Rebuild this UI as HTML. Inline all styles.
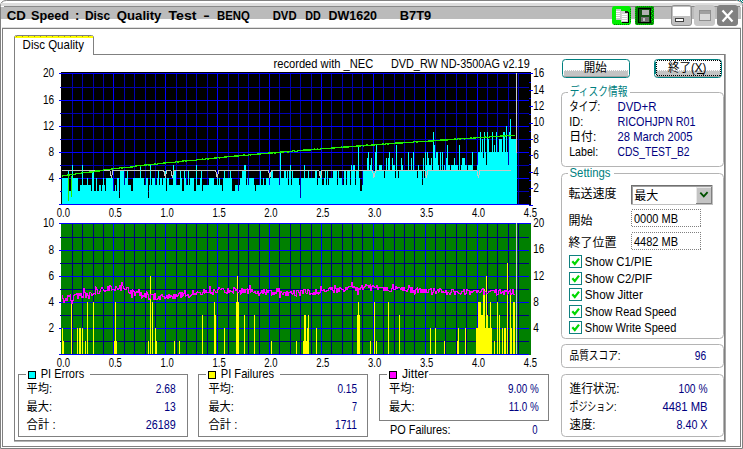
<!DOCTYPE html>
<html><head><meta charset="utf-8"><title>CD Speed : Disc Quality Test</title>
<style>html,body{margin:0;padding:0;background:#fff;overflow:hidden}svg text{white-space:pre}</style></head>
<body>
<svg width="743" height="449" viewBox="0 0 743 449" shape-rendering="crispEdges" font-family="'Liberation Sans','Noto Sans CJK JP',sans-serif" style="display:block">
<rect x="0" y="0" width="743" height="449" fill="#fff" />
<path d="M0.5 448.5V6.5Q0.5 0.5 6.5 0.5H736.5Q742.5 0.5 742.5 6.5V448.5Z" fill="#fff" stroke="#808080" stroke-width="1" shape-rendering="geometricPrecision"/>
<rect x="738" y="0" width="1" height="1" fill="#008080" />
<rect x="740" y="0" width="1" height="1" fill="#008080" />
<rect x="742" y="0" width="1" height="1" fill="#008080" />
<rect x="741" y="1" width="1" height="1" fill="#008080" />
<rect x="739" y="1" width="1" height="1" fill="#a08080" />
<rect x="742" y="2" width="1" height="1" fill="#008080" />
<rect x="1" y="3" width="740" height="3" fill="#dcdcdc" />
<rect x="1" y="7" width="740" height="12" fill="#bbbbbb" />
<rect x="4" y="6" width="736" height="1" fill="#888888" />
<rect x="2" y="27" width="739" height="1" fill="#dedede" />
<rect x="2" y="28" width="739" height="1" fill="#808080" />
<rect x="2" y="28" width="1" height="419" fill="#808080" />
<rect x="740" y="28" width="1" height="419" fill="#808080" />
<rect x="2" y="446" width="739" height="1" fill="#808080" />
<text y="20" fill="#000" font-size="13" font-weight="bold"><tspan x="6.8" textLength="19.1" lengthAdjust="spacingAndGlyphs">CD</tspan> <tspan x="31.1" textLength="38.0" lengthAdjust="spacingAndGlyphs">Speed</tspan> <tspan x="75.0">:</tspan> <tspan x="84.9" textLength="25.3" lengthAdjust="spacingAndGlyphs">Disc</tspan> <tspan x="116.8" textLength="44.6" lengthAdjust="spacingAndGlyphs">Quality</tspan> <tspan x="168.5" textLength="28.0" lengthAdjust="spacingAndGlyphs">Test</tspan> <tspan x="203.3" textLength="6.5" lengthAdjust="spacingAndGlyphs">-</tspan> <tspan x="217.0" textLength="32.8" lengthAdjust="spacingAndGlyphs">BENQ</tspan> <tspan x="272.7" textLength="23.9" lengthAdjust="spacingAndGlyphs">DVD</tspan> <tspan x="305.2" textLength="15.5" lengthAdjust="spacingAndGlyphs">DD</tspan> <tspan x="328.5" textLength="48.5" lengthAdjust="spacingAndGlyphs">DW1620</tspan> <tspan x="399.7" textLength="31.5" lengthAdjust="spacingAndGlyphs">B7T9</tspan></text>
<rect x="612" y="6" width="19" height="19" rx="3" fill="#00f000" shape-rendering="geometricPrecision"/>
<path d="M614 24.5H629" stroke="#008000" stroke-width="1" stroke-dasharray="1 1"/>
<path d="M630.5 9V22" stroke="#008000" stroke-width="1" stroke-dasharray="1 1"/>
<g><rect x="616" y="9" width="5" height="11" fill="#c8c8c8"/><rect x="616" y="11" width="4" height="1" fill="#fff"/><rect x="616" y="13" width="4" height="1" fill="#fff"/><rect x="616" y="15" width="4" height="1" fill="#fff"/><rect x="616" y="17" width="4" height="1" fill="#fff"/><rect x="621" y="11" width="7" height="11" fill="#d0d0d0"/><rect x="628" y="12" width="1" height="10" fill="#000"/><rect x="622" y="22" width="7" height="1" fill="#000"/><rect x="625" y="11" width="3" height="2" fill="#202020"/><rect x="622" y="14" width="5" height="1" fill="#fff"/><rect x="622" y="16" width="5" height="1" fill="#fff"/><rect x="622" y="18" width="5" height="1" fill="#fff"/><rect x="622" y="20" width="5" height="1" fill="#fff"/></g>
<rect x="635" y="6" width="19" height="19" rx="2" fill="#008000" shape-rendering="geometricPrecision"/>
<rect x="635.5" y="6.5" width="18" height="18" rx="2" fill="none" stroke="#00d000" stroke-dasharray="1 1" shape-rendering="crispEdges"/>
<g><rect x="638.5" y="8.5" width="12" height="14" fill="#105010" stroke="#000"/><rect x="642" y="10" width="7" height="5" fill="#b0b0b0"/><rect x="641" y="17" width="8" height="5" fill="#707070"/><rect x="643" y="18" width="2" height="3" fill="#c0c0c0"/><rect x="652" y="9" width="1" height="1" fill="#00ff00"/><rect x="651" y="11" width="1" height="1" fill="#00ff00"/><rect x="652" y="13" width="1" height="1" fill="#00ff00"/><rect x="651" y="15" width="1" height="1" fill="#00ff00"/><rect x="652" y="17" width="1" height="1" fill="#00ff00"/><rect x="651" y="19" width="1" height="1" fill="#00ff00"/><rect x="652" y="21" width="1" height="1" fill="#00ff00"/></g>
<rect x="671.5" y="5.5" width="20" height="20" rx="2.5" fill="#c0c0c0" stroke="#909090" shape-rendering="geometricPrecision"/>
<rect x="673" y="7" width="17" height="9" fill="#fff" />
<rect x="675" y="18" width="8" height="3" fill="#fff" stroke="#404040" stroke-width="1"/>
<rect x="694.5" y="5.5" width="20" height="20" rx="2.5" fill="#c8c8c8" stroke="#c8c8c8" shape-rendering="geometricPrecision"/>
<rect x="699.5" y="10.5" width="11" height="10" fill="#d8d8d8" stroke="#909090" stroke-width="1"/>
<rect x="700" y="11" width="10" height="3" fill="#a0a0a0" />
<rect x="717.5" y="5.5" width="20" height="20" rx="2.5" fill="#808080" stroke="#808080" shape-rendering="geometricPrecision"/>
<path d="M722.5 10.5L732.5 21.5M732.5 10.5L722.5 21.5" stroke="#fff" stroke-width="2.2" shape-rendering="geometricPrecision"/>
<rect x="93" y="54" width="633" height="1" fill="#808080" />
<rect x="14" y="37" width="1" height="404" fill="#808080" />
<rect x="725" y="54" width="1" height="388" fill="#a8a8a8" />
<rect x="14" y="441" width="712" height="1" fill="#b4b4b4" />
<rect x="724" y="54" width="1" height="387" fill="#808080" />
<rect x="14" y="440" width="711" height="1" fill="#808080" />
<rect x="93" y="37" width="1" height="18" fill="#808080" />
<path d="M14.5 38V37.5Q14.5 35.5 16.5 35.5H91.5Q93.5 35.5 93.5 37.5V38" fill="none" stroke="#808080" shape-rendering="geometricPrecision"/>
<rect x="15" y="36" width="78" height="2" fill="#ffff00" />
<path d="M16 36.5H92" stroke="#b0a000" stroke-width="1" stroke-dasharray="1 5" shape-rendering="crispEdges"/>
<text y="49.0" fill="#000" font-size="13" x="22.6" textLength="61.4" lengthAdjust="spacingAndGlyphs">Disc Quality</text>
<rect x="61" y="72" width="470" height="133" fill="#000" />
<rect x="72" y="73" width="1" height="132" fill="#0000b0" />
<rect x="82" y="73" width="1" height="132" fill="#0000b0" />
<rect x="93" y="73" width="1" height="132" fill="#0000b0" />
<rect x="103" y="73" width="1" height="132" fill="#0000b0" />
<rect x="113" y="73" width="1" height="132" fill="#0000ff" />
<rect x="124" y="73" width="1" height="132" fill="#0000b0" />
<rect x="134" y="73" width="1" height="132" fill="#0000b0" />
<rect x="145" y="73" width="1" height="132" fill="#0000b0" />
<rect x="155" y="73" width="1" height="132" fill="#0000b0" />
<rect x="165" y="73" width="1" height="132" fill="#0000ff" />
<rect x="176" y="73" width="1" height="132" fill="#0000b0" />
<rect x="186" y="73" width="1" height="132" fill="#0000b0" />
<rect x="196" y="73" width="1" height="132" fill="#0000b0" />
<rect x="207" y="73" width="1" height="132" fill="#0000b0" />
<rect x="217" y="73" width="1" height="132" fill="#0000ff" />
<rect x="228" y="73" width="1" height="132" fill="#0000b0" />
<rect x="238" y="73" width="1" height="132" fill="#0000b0" />
<rect x="248" y="73" width="1" height="132" fill="#0000b0" />
<rect x="259" y="73" width="1" height="132" fill="#0000b0" />
<rect x="269" y="73" width="1" height="132" fill="#0000ff" />
<rect x="279" y="73" width="1" height="132" fill="#0000b0" />
<rect x="290" y="73" width="1" height="132" fill="#0000b0" />
<rect x="300" y="73" width="1" height="132" fill="#0000b0" />
<rect x="311" y="73" width="1" height="132" fill="#0000b0" />
<rect x="321" y="73" width="1" height="132" fill="#0000ff" />
<rect x="331" y="73" width="1" height="132" fill="#0000b0" />
<rect x="342" y="73" width="1" height="132" fill="#0000b0" />
<rect x="352" y="73" width="1" height="132" fill="#0000b0" />
<rect x="362" y="73" width="1" height="132" fill="#0000b0" />
<rect x="373" y="73" width="1" height="132" fill="#0000ff" />
<rect x="383" y="73" width="1" height="132" fill="#0000b0" />
<rect x="394" y="73" width="1" height="132" fill="#0000b0" />
<rect x="404" y="73" width="1" height="132" fill="#0000b0" />
<rect x="414" y="73" width="1" height="132" fill="#0000b0" />
<rect x="425" y="73" width="1" height="132" fill="#0000ff" />
<rect x="435" y="73" width="1" height="132" fill="#0000b0" />
<rect x="445" y="73" width="1" height="132" fill="#0000b0" />
<rect x="456" y="73" width="1" height="132" fill="#0000b0" />
<rect x="466" y="73" width="1" height="132" fill="#0000b0" />
<rect x="477" y="73" width="1" height="132" fill="#0000ff" />
<rect x="487" y="73" width="1" height="132" fill="#0000b0" />
<rect x="497" y="73" width="1" height="132" fill="#0000b0" />
<rect x="508" y="73" width="1" height="132" fill="#0000b0" />
<rect x="518" y="73" width="1" height="132" fill="#0000b0" />
<rect x="59" y="73" width="474" height="1" fill="#0000ff" />
<rect x="60" y="87" width="469" height="1" fill="#0000b0" />
<rect x="59" y="100" width="470" height="1" fill="#0000ff" />
<rect x="60" y="113" width="469" height="1" fill="#0000b0" />
<rect x="59" y="126" width="470" height="1" fill="#0000ff" />
<rect x="60" y="139" width="469" height="1" fill="#0000b0" />
<rect x="59" y="152" width="470" height="1" fill="#0000ff" />
<rect x="60" y="165" width="469" height="1" fill="#0000b0" />
<rect x="59" y="178" width="470" height="1" fill="#0000ff" />
<rect x="60" y="191" width="469" height="1" fill="#0000b0" />
<rect x="59" y="204" width="470" height="1" fill="#0000ff" />
<rect x="529" y="73" width="4" height="1" fill="#0000ff" />
<rect x="529" y="82" width="2" height="1" fill="#0000ff" />
<rect x="529" y="90" width="4" height="1" fill="#0000ff" />
<rect x="529" y="98" width="2" height="1" fill="#0000ff" />
<rect x="529" y="106" width="4" height="1" fill="#0000ff" />
<rect x="529" y="114" width="2" height="1" fill="#0000ff" />
<rect x="529" y="123" width="4" height="1" fill="#0000ff" />
<rect x="529" y="131" width="2" height="1" fill="#0000ff" />
<rect x="529" y="139" width="4" height="1" fill="#0000ff" />
<rect x="529" y="147" width="2" height="1" fill="#0000ff" />
<rect x="529" y="155" width="4" height="1" fill="#0000ff" />
<rect x="529" y="164" width="2" height="1" fill="#0000ff" />
<rect x="529" y="172" width="4" height="1" fill="#0000ff" />
<rect x="529" y="180" width="2" height="1" fill="#0000ff" />
<rect x="529" y="188" width="4" height="1" fill="#0000ff" />
<rect x="529" y="196" width="2" height="1" fill="#0000ff" />
<rect x="529" y="205" width="4" height="1" fill="#0000ff" />
<text y="77.0" fill="#000" font-size="13" x="43.0" textLength="11.2" lengthAdjust="spacingAndGlyphs">20</text>
<text y="104.0" fill="#000" font-size="13" x="43.0" textLength="11.2" lengthAdjust="spacingAndGlyphs">16</text>
<text y="130.0" fill="#000" font-size="13" x="43.0" textLength="11.2" lengthAdjust="spacingAndGlyphs">12</text>
<text y="156.0" fill="#000" font-size="13" x="48.6" textLength="5.6" lengthAdjust="spacingAndGlyphs">8</text>
<text y="182.0" fill="#000" font-size="13" x="48.6" textLength="5.6" lengthAdjust="spacingAndGlyphs">4</text>
<text y="77.0" fill="#000" font-size="13" x="533.3" textLength="11.0" lengthAdjust="spacingAndGlyphs">16</text>
<text y="94.0" fill="#000" font-size="13" x="533.3" textLength="11.0" lengthAdjust="spacingAndGlyphs">14</text>
<text y="110.0" fill="#000" font-size="13" x="533.3" textLength="11.0" lengthAdjust="spacingAndGlyphs">12</text>
<text y="126.0" fill="#000" font-size="13" x="533.3" textLength="11.0" lengthAdjust="spacingAndGlyphs">10</text>
<text y="143.0" fill="#000" font-size="13" x="533.3" textLength="5.6" lengthAdjust="spacingAndGlyphs">8</text>
<text y="159.0" fill="#000" font-size="13" x="533.3" textLength="5.6" lengthAdjust="spacingAndGlyphs">6</text>
<text y="176.0" fill="#000" font-size="13" x="533.3" textLength="5.6" lengthAdjust="spacingAndGlyphs">4</text>
<text y="192.0" fill="#000" font-size="13" x="533.3" textLength="5.6" lengthAdjust="spacingAndGlyphs">2</text>
<text y="217.0" fill="#000" font-size="13" x="56.8" textLength="13.2" lengthAdjust="spacingAndGlyphs">0.0</text>
<text y="217.0" fill="#000" font-size="13" x="108.7" textLength="13.2" lengthAdjust="spacingAndGlyphs">0.5</text>
<text y="217.0" fill="#000" font-size="13" x="160.6" textLength="13.2" lengthAdjust="spacingAndGlyphs">1.0</text>
<text y="217.0" fill="#000" font-size="13" x="212.5" textLength="13.2" lengthAdjust="spacingAndGlyphs">1.5</text>
<text y="217.0" fill="#000" font-size="13" x="264.3" textLength="13.2" lengthAdjust="spacingAndGlyphs">2.0</text>
<text y="217.0" fill="#000" font-size="13" x="316.2" textLength="13.2" lengthAdjust="spacingAndGlyphs">2.5</text>
<text y="217.0" fill="#000" font-size="13" x="368.1" textLength="13.2" lengthAdjust="spacingAndGlyphs">3.0</text>
<text y="217.0" fill="#000" font-size="13" x="420.0" textLength="13.2" lengthAdjust="spacingAndGlyphs">3.5</text>
<text y="217.0" fill="#000" font-size="13" x="471.9" textLength="13.2" lengthAdjust="spacingAndGlyphs">4.0</text>
<text y="217.0" fill="#000" font-size="13" x="523.8" textLength="13.2" lengthAdjust="spacingAndGlyphs">4.5</text>
<path d="M62 205V178h1V178h1V178h1V178h1V178h1V178h1V171h1V191h1V191h1V191h1V165h1V178h1V178h1V178h1V178h1V178h1V191h1V191h1V185h1V185h1V165h1V185h1V185h1V185h1V185h1V178h1V185h1V185h1V185h1V191h1V171h1V171h1V191h1V191h1V178h1V191h1V191h1V185h1V185h1V191h1V185h1V178h1V185h1V191h1V178h1V178h1V178h1V178h1V178h1V178h1V178h1V191h1V191h1V185h1V191h1V178h1V178h1V198h1V171h1V171h1V171h1V171h1V185h1V178h1V178h1V171h1V185h1V185h1V185h1V191h1V191h1V178h1V178h1V178h1V178h1V178h1V178h1V178h1V165h1V178h1V178h1V178h1V185h1V185h1V178h1V178h1V198h1V185h1V165h1V185h1V178h1V178h1V178h1V185h1V185h1V178h1V171h1V185h1V178h1V178h1V185h1V178h1V178h1V171h1V191h1V178h1V178h1V185h1V185h1V185h1V185h1V165h1V171h1V171h1V185h1V185h1V185h1V185h1V171h1V178h1V191h1V191h1V171h1V178h1V185h1V185h1V171h1V185h1V178h1V178h1V178h1V178h1V191h1V191h1V165h1V185h1V185h1V185h1V178h1V171h1V191h1V185h1V185h1V185h1V185h1V185h1V185h1V178h1V178h1V178h1V178h1V178h1V185h1V185h1V185h1V178h1V185h1V178h1V185h1V185h1V191h1V178h1V171h1V178h1V178h1V178h1V178h1V178h1V171h1V178h1V191h1V191h1V191h1V185h1V185h1V185h1V191h1V185h1V178h1V178h1V171h1V171h1V165h1V165h1V185h1V178h1V185h1V178h1V178h1V178h1V178h1V178h1V185h1V191h1V185h1V185h1V185h1V185h1V171h1V185h1V185h1V178h1V185h1V185h1V178h1V178h1V178h1V185h1V178h1V171h1V171h1V178h1V178h1V178h1V178h1V178h1V178h1V185h1V152h1V178h1V178h1V178h1V171h1V171h1V178h1V171h1V185h1V171h1V165h1V185h1V171h1V178h1V178h1V178h1V178h1V178h1V178h1V185h1V198h1V178h1V178h1V178h1V165h1V178h1V178h1V178h1V171h1V178h1V178h1V178h1V178h1V178h1V178h1V171h1V171h1V185h1V178h1V178h1V171h1V171h1V185h1V185h1V178h1V171h1V185h1V171h1V185h1V178h1V178h1V178h1V178h1V171h1V171h1V171h1V171h1V185h1V171h1V178h1V178h1V178h1V185h1V185h1V171h1V171h1V185h1V171h1V171h1V171h1V185h1V165h1V171h1V165h1V165h1V185h1V171h1V171h1V145h1V178h1V191h1V191h1V185h1V171h1V171h1V171h1V171h1V158h1V152h1V171h1V165h1V158h1V171h1V171h1V171h1V152h1V145h1V171h1V171h1V165h1V165h1V165h1V171h1V171h1V178h1V171h1V158h1V171h1V158h1V152h1V171h1V171h1V158h1V165h1V165h1V178h1V145h1V171h1V178h1V171h1V171h1V158h1V165h1V171h1V171h1V171h1V171h1V171h1V152h1V171h1V171h1V158h1V171h1V152h1V171h1V171h1V171h1V178h1V165h1V171h1V171h1V171h1V185h1V158h1V178h1V152h1V165h1V152h1V158h1V165h1V165h1V158h1V171h1V132h1V145h1V158h1V152h1V152h1V165h1V171h1V152h1V171h1V152h1V171h1V165h1V171h1V158h1V145h1V165h1V165h1V171h1V165h1V165h1V165h1V158h1V165h1V165h1V165h1V171h1V145h1V171h1V165h1V158h1V158h1V158h1V165h1V165h1V171h1V165h1V165h1V165h1V165h1V152h1V171h1V171h1V171h1V171h1V165h1V152h1V152h1V132h1V152h1V139h1V158h1V132h1V152h1V165h1V132h1V139h1V152h1V152h1V152h1V132h1V152h1V145h1V152h1V132h1V152h1V152h1V139h1V139h1V139h1V152h1V132h1V132h1V152h1V126h1V152h1V165h1V132h1V119h1V139h1V139h1V139h1V139h1V139h1V139h1V205Z" fill="#00ffff"/>
<rect x="59" y="204" width="470" height="1" fill="#0000ff" />
<polyline points="62.0,170.5 109.9,170.5 111.4,177.5 112.9,170.5 163.8,170.5 165.3,177.5 166.8,170.5 170.9,170.5 172.4,177.5 173.9,170.5 215.7,170.5 217.2,177.5 218.7,170.5 268.4,170.5 269.9,177.5 271.4,170.5 318.9,170.5 320.4,177.5 321.9,170.5 372.5,170.5 374.0,177.5 375.5,170.5 424.9,170.5 426.4,177.5 427.9,170.5 476.9,170.5 478.4,177.5 479.9,170.5 511.0,170.5" fill="none" stroke="#c8c8c8" stroke-width="1" shape-rendering="crispEdges"/>
<polyline points="62,175.9 63,175.9 64,175.4 65,175.9 66,175.5 67,175.6 68,174.8 69,175.0 70,174.9 71,174.7 72,174.1 73,174.4 74,174.2 75,174.3 76,173.9 77,173.8 78,173.5 79,173.4 80,173.5 81,173.0 82,172.8 83,172.8 84,172.9 85,172.8 86,172.5 87,172.2 88,172.4 89,172.3 90,172.0 91,172.0 92,172.1 93,171.7 94,171.5 95,171.2 96,170.9 97,171.4 98,170.7 99,171.1 100,171.0 101,170.2 102,170.5 103,170.0 104,169.8 105,169.7 106,169.7 107,169.6 108,169.4 109,169.2 110,169.7 111,169.0 112,169.4 113,168.9 114,168.5 115,169.0 116,168.6 117,168.3 118,168.7 119,168.1 120,167.7 121,167.8 122,168.1 123,167.4 124,167.4 125,167.8 126,167.6 127,167.3 128,167.3 129,167.3 130,167.1 131,166.9 132,167.0 133,166.7 134,166.5 135,166.1 136,166.0 137,165.8 138,165.9 139,165.7 140,165.9 141,166.0 142,165.3 143,165.4 144,165.5 145,164.9 146,165.4 147,165.0 148,164.5 149,165.1 150,164.7 151,164.7 152,164.7 153,164.6 154,164.1 155,163.7 156,164.3 157,164.2 158,163.5 159,163.5 160,163.3 161,163.6 162,163.7 163,163.0 164,163.0 165,163.3 166,162.9 167,162.6 168,162.7 169,162.2 170,162.7 171,162.3 172,162.2 173,162.4 174,162.1 175,162.4 176,161.6 177,161.8 178,162.0 179,161.8 180,161.6 181,161.5 182,161.1 183,161.1 184,160.7 185,160.6 186,161.2 187,160.9 188,160.8 189,160.6 190,160.2 191,160.2 192,160.2 193,160.5 194,160.4 195,160.4 196,160.2 197,159.7 198,159.4 199,159.9 200,159.1 201,159.6 202,159.0 203,159.3 204,159.3 205,159.2 206,158.6 207,158.9 208,159.0 209,158.8 210,158.4 211,158.8 212,158.5 213,158.3 214,158.4 215,158.0 216,158.2 217,157.6 218,157.9 219,157.8 220,158.0 221,157.6 222,157.4 223,157.5 224,157.4 225,157.0 226,157.1 227,156.8 228,156.8 229,156.8 230,156.3 231,156.9 232,156.2 233,156.2 234,156.2 235,155.9 236,156.1 237,155.9 238,156.3 239,155.9 240,155.6 241,155.7 242,155.7 243,155.2 244,155.0 245,155.1 246,155.3 247,155.2 248,155.3 249,154.7 250,154.8 251,155.0 252,154.4 253,154.5 254,154.5 255,154.5 256,154.5 257,154.6 258,153.8 259,154.4 260,154.0 261,154.0 262,153.6 263,153.7 264,153.4 265,153.2 266,153.7 267,153.5 268,153.0 269,152.9 270,153.0 271,153.3 272,152.9 273,152.9 274,152.8 275,153.0 276,152.8 277,152.3 278,152.2 279,152.4 280,152.5 281,151.9 282,152.0 283,152.2 284,151.9 285,151.7 286,151.7 287,151.6 288,152.0 289,151.7 290,151.2 291,151.2 292,151.4 293,150.8 294,150.7 295,151.2 296,151.3 297,151.1 298,150.4 299,150.7 300,150.8 301,150.2 302,150.2 303,150.3 304,150.0 305,149.9 306,150.3 307,149.9 308,150.2 309,149.9 310,150.1 311,149.6 312,149.5 313,149.4 314,149.1 315,149.2 316,149.2 317,149.2 318,149.0 319,149.5 320,149.3 321,148.8 322,148.6 323,148.8 324,148.4 325,148.4 326,148.7 327,148.2 328,148.8 329,148.0 330,148.6 331,148.1 332,148.1 333,147.9 334,148.0 335,147.8 336,147.4 337,147.3 338,147.9 339,147.5 340,147.7 341,147.0 342,147.3 343,147.3 344,147.0 345,146.8 346,147.1 347,147.1 348,147.1 349,146.4 350,146.3 351,146.7 352,146.6 353,146.2 354,146.5 355,146.6 356,146.2 357,145.8 358,146.4 359,145.6 360,146.2 361,145.6 362,145.6 363,145.9 364,145.9 365,145.3 366,145.1 367,145.0 368,145.4 369,145.3 370,145.5 371,145.1 372,145.1 373,145.2 374,145.1 375,144.8 376,144.9 377,144.6 378,144.3 379,144.7 380,144.5 381,144.8 382,144.4 383,144.0 384,144.4 385,144.1 386,143.7 387,143.9 388,144.2 389,143.9 390,143.7 391,143.3 392,143.7 393,143.9 394,143.7 395,143.2 396,143.0 397,143.2 398,143.0 399,143.1 400,143.0 401,143.1 402,143.2 403,142.7 404,142.9 405,142.8 406,142.3 407,142.7 408,142.3 409,142.4 410,142.3 411,142.4 412,142.5 413,142.4 414,141.7 415,141.6 416,141.5 417,142.1 418,141.9 419,141.8 420,141.5 421,141.4 422,141.6 423,141.8 424,141.6 425,141.4 426,141.1 427,141.5 428,141.2 429,141.0 430,140.7 431,141.2 432,140.5 433,141.1 434,140.4 435,140.8 436,140.5 437,140.7 438,140.3 439,140.1 440,140.4 441,140.0 442,139.9 443,140.1 444,140.1 445,140.1 446,139.9 447,140.1 448,139.9 449,139.2 450,139.3 451,139.8 452,139.5 453,139.7 454,139.1 455,139.1 456,139.1 457,139.3 458,138.8 459,138.9 460,139.0 461,138.7 462,138.6 463,138.4 464,139.0 465,138.8 466,138.7 467,138.3 468,138.1 469,138.6 470,138.6 471,137.9 472,138.5 473,138.3 474,138.0 475,138.1 476,137.8 477,137.8 478,137.7 479,137.6 480,137.5 481,137.7 482,137.6 483,137.8 484,137.2 485,136.9 486,137.1 487,137.3 488,137.4 489,137.1 490,136.5 491,136.8 492,136.8 493,136.8 494,136.5 495,136.2 496,136.5 497,136.5 498,136.2 499,136.6 500,136.1 501,136.2 502,135.9 503,135.9 504,135.7 505,136.2 506,135.7 507,135.9 508,135.7 509,135.9 510,135.9 511,135.4 512,135.8 513,135.4 514,135.7 515,135.2" fill="none" stroke="#20f000" stroke-width="1.3" shape-rendering="crispEdges"/>
<rect x="68" y="176" width="1" height="25" fill="#20f000" />
<rect x="71" y="176" width="1" height="21" fill="#20f000" />
<rect x="516" y="73" width="1" height="80" fill="#c8c8c8" />
<rect x="61" y="223" width="470" height="132" fill="#008000" />
<rect x="72" y="223" width="1" height="132" fill="#000080" />
<rect x="82" y="223" width="1" height="132" fill="#000080" />
<rect x="93" y="223" width="1" height="132" fill="#000080" />
<rect x="103" y="223" width="1" height="132" fill="#000080" />
<rect x="113" y="223" width="1" height="132" fill="#0000ff" />
<rect x="124" y="223" width="1" height="132" fill="#000080" />
<rect x="134" y="223" width="1" height="132" fill="#000080" />
<rect x="145" y="223" width="1" height="132" fill="#000080" />
<rect x="155" y="223" width="1" height="132" fill="#000080" />
<rect x="165" y="223" width="1" height="132" fill="#0000ff" />
<rect x="176" y="223" width="1" height="132" fill="#000080" />
<rect x="186" y="223" width="1" height="132" fill="#000080" />
<rect x="196" y="223" width="1" height="132" fill="#000080" />
<rect x="207" y="223" width="1" height="132" fill="#000080" />
<rect x="217" y="223" width="1" height="132" fill="#0000ff" />
<rect x="228" y="223" width="1" height="132" fill="#000080" />
<rect x="238" y="223" width="1" height="132" fill="#000080" />
<rect x="248" y="223" width="1" height="132" fill="#000080" />
<rect x="259" y="223" width="1" height="132" fill="#000080" />
<rect x="269" y="223" width="1" height="132" fill="#0000ff" />
<rect x="279" y="223" width="1" height="132" fill="#000080" />
<rect x="290" y="223" width="1" height="132" fill="#000080" />
<rect x="300" y="223" width="1" height="132" fill="#000080" />
<rect x="311" y="223" width="1" height="132" fill="#000080" />
<rect x="321" y="223" width="1" height="132" fill="#0000ff" />
<rect x="331" y="223" width="1" height="132" fill="#000080" />
<rect x="342" y="223" width="1" height="132" fill="#000080" />
<rect x="352" y="223" width="1" height="132" fill="#000080" />
<rect x="362" y="223" width="1" height="132" fill="#000080" />
<rect x="373" y="223" width="1" height="132" fill="#0000ff" />
<rect x="383" y="223" width="1" height="132" fill="#000080" />
<rect x="394" y="223" width="1" height="132" fill="#000080" />
<rect x="404" y="223" width="1" height="132" fill="#000080" />
<rect x="414" y="223" width="1" height="132" fill="#000080" />
<rect x="425" y="223" width="1" height="132" fill="#0000ff" />
<rect x="435" y="223" width="1" height="132" fill="#000080" />
<rect x="445" y="223" width="1" height="132" fill="#000080" />
<rect x="456" y="223" width="1" height="132" fill="#000080" />
<rect x="466" y="223" width="1" height="132" fill="#000080" />
<rect x="477" y="223" width="1" height="132" fill="#0000ff" />
<rect x="487" y="223" width="1" height="132" fill="#000080" />
<rect x="497" y="223" width="1" height="132" fill="#000080" />
<rect x="508" y="223" width="1" height="132" fill="#000080" />
<rect x="518" y="223" width="1" height="132" fill="#000080" />
<rect x="59" y="223" width="472" height="1" fill="#0000ff" />
<rect x="60" y="237" width="469" height="1" fill="#000080" />
<rect x="59" y="250" width="470" height="1" fill="#0000ff" />
<rect x="60" y="263" width="469" height="1" fill="#000080" />
<rect x="59" y="276" width="470" height="1" fill="#0000ff" />
<rect x="60" y="289" width="469" height="1" fill="#000080" />
<rect x="59" y="302" width="470" height="1" fill="#0000ff" />
<rect x="60" y="315" width="469" height="1" fill="#000080" />
<rect x="59" y="328" width="470" height="1" fill="#0000ff" />
<rect x="60" y="341" width="469" height="1" fill="#000080" />
<rect x="59" y="354" width="470" height="1" fill="#0000ff" />
<text y="227.0" fill="#000" font-size="13" x="43.0" textLength="11.2" lengthAdjust="spacingAndGlyphs">10</text>
<text y="254.0" fill="#000" font-size="13" x="48.6" textLength="5.6" lengthAdjust="spacingAndGlyphs">8</text>
<text y="280.0" fill="#000" font-size="13" x="48.6" textLength="5.6" lengthAdjust="spacingAndGlyphs">6</text>
<text y="306.0" fill="#000" font-size="13" x="48.6" textLength="5.6" lengthAdjust="spacingAndGlyphs">4</text>
<text y="332.0" fill="#000" font-size="13" x="48.6" textLength="5.6" lengthAdjust="spacingAndGlyphs">2</text>
<text y="227.0" fill="#000" font-size="13" x="533.3" textLength="11.0" lengthAdjust="spacingAndGlyphs">20</text>
<text y="253.0" fill="#000" font-size="13" x="533.3" textLength="11.0" lengthAdjust="spacingAndGlyphs">16</text>
<text y="280.0" fill="#000" font-size="13" x="533.3" textLength="11.0" lengthAdjust="spacingAndGlyphs">12</text>
<text y="306.0" fill="#000" font-size="13" x="533.3" textLength="5.6" lengthAdjust="spacingAndGlyphs">8</text>
<text y="332.0" fill="#000" font-size="13" x="533.3" textLength="5.6" lengthAdjust="spacingAndGlyphs">4</text>
<text y="367.0" fill="#000" font-size="13" x="56.8" textLength="13.2" lengthAdjust="spacingAndGlyphs">0.0</text>
<text y="367.0" fill="#000" font-size="13" x="108.7" textLength="13.2" lengthAdjust="spacingAndGlyphs">0.5</text>
<text y="367.0" fill="#000" font-size="13" x="160.6" textLength="13.2" lengthAdjust="spacingAndGlyphs">1.0</text>
<text y="367.0" fill="#000" font-size="13" x="212.5" textLength="13.2" lengthAdjust="spacingAndGlyphs">1.5</text>
<text y="367.0" fill="#000" font-size="13" x="264.3" textLength="13.2" lengthAdjust="spacingAndGlyphs">2.0</text>
<text y="367.0" fill="#000" font-size="13" x="316.2" textLength="13.2" lengthAdjust="spacingAndGlyphs">2.5</text>
<text y="367.0" fill="#000" font-size="13" x="368.1" textLength="13.2" lengthAdjust="spacingAndGlyphs">3.0</text>
<text y="367.0" fill="#000" font-size="13" x="420.0" textLength="13.2" lengthAdjust="spacingAndGlyphs">3.5</text>
<text y="367.0" fill="#000" font-size="13" x="471.9" textLength="13.2" lengthAdjust="spacingAndGlyphs">4.0</text>
<text y="367.0" fill="#000" font-size="13" x="523.8" textLength="13.2" lengthAdjust="spacingAndGlyphs">4.5</text>
<rect x="62" y="328" width="1" height="26" fill="#ffff00" />
<rect x="63" y="341" width="1" height="13" fill="#ffff00" />
<rect x="71" y="302" width="1" height="52" fill="#ffff00" />
<rect x="77" y="328" width="1" height="26" fill="#ffff00" />
<rect x="79" y="328" width="1" height="26" fill="#ffff00" />
<rect x="80" y="328" width="1" height="26" fill="#ffff00" />
<rect x="82" y="328" width="1" height="26" fill="#ffff00" />
<rect x="85" y="341" width="1" height="13" fill="#ffff00" />
<rect x="87" y="302" width="1" height="52" fill="#ffff00" />
<rect x="93" y="302" width="1" height="52" fill="#ffff00" />
<rect x="114" y="341" width="1" height="13" fill="#ffff00" />
<rect x="115" y="302" width="1" height="52" fill="#ffff00" />
<rect x="116" y="341" width="1" height="13" fill="#ffff00" />
<rect x="148" y="341" width="1" height="13" fill="#ffff00" />
<rect x="150" y="276" width="1" height="78" fill="#ffff00" />
<rect x="152" y="302" width="1" height="52" fill="#ffff00" />
<rect x="155" y="328" width="1" height="26" fill="#ffff00" />
<rect x="156" y="341" width="1" height="13" fill="#ffff00" />
<rect x="174" y="341" width="1" height="13" fill="#ffff00" />
<rect x="179" y="341" width="1" height="13" fill="#ffff00" />
<rect x="202" y="315" width="1" height="39" fill="#ffff00" />
<rect x="214" y="302" width="1" height="52" fill="#ffff00" />
<rect x="215" y="315" width="1" height="39" fill="#ffff00" />
<rect x="224" y="328" width="1" height="26" fill="#ffff00" />
<rect x="236" y="302" width="1" height="52" fill="#ffff00" />
<rect x="237" y="276" width="1" height="78" fill="#ffff00" />
<rect x="238" y="302" width="1" height="52" fill="#ffff00" />
<rect x="244" y="315" width="1" height="39" fill="#ffff00" />
<rect x="254" y="315" width="1" height="39" fill="#ffff00" />
<rect x="271" y="341" width="1" height="13" fill="#ffff00" />
<rect x="296" y="341" width="1" height="13" fill="#ffff00" />
<rect x="303" y="341" width="1" height="13" fill="#ffff00" />
<rect x="304" y="315" width="1" height="39" fill="#ffff00" />
<rect x="305" y="315" width="1" height="39" fill="#ffff00" />
<rect x="306" y="341" width="1" height="13" fill="#ffff00" />
<rect x="307" y="328" width="1" height="26" fill="#ffff00" />
<rect x="308" y="315" width="1" height="39" fill="#ffff00" />
<rect x="316" y="328" width="1" height="26" fill="#ffff00" />
<rect x="357" y="315" width="1" height="39" fill="#ffff00" />
<rect x="358" y="302" width="1" height="52" fill="#ffff00" />
<rect x="359" y="315" width="1" height="39" fill="#ffff00" />
<rect x="370" y="341" width="1" height="13" fill="#ffff00" />
<rect x="374" y="302" width="1" height="52" fill="#ffff00" />
<rect x="376" y="341" width="1" height="13" fill="#ffff00" />
<rect x="388" y="302" width="1" height="52" fill="#ffff00" />
<rect x="399" y="315" width="1" height="39" fill="#ffff00" />
<rect x="430" y="328" width="1" height="26" fill="#ffff00" />
<rect x="435" y="328" width="1" height="26" fill="#ffff00" />
<rect x="444" y="341" width="1" height="13" fill="#ffff00" />
<rect x="457" y="341" width="1" height="13" fill="#ffff00" />
<rect x="458" y="328" width="1" height="26" fill="#ffff00" />
<rect x="465" y="328" width="1" height="26" fill="#ffff00" />
<rect x="476" y="328" width="1" height="26" fill="#ffff00" />
<rect x="477" y="328" width="1" height="26" fill="#ffff00" />
<rect x="478" y="302" width="1" height="52" fill="#ffff00" />
<rect x="479" y="302" width="1" height="52" fill="#ffff00" />
<rect x="480" y="302" width="1" height="52" fill="#ffff00" />
<rect x="481" y="315" width="1" height="39" fill="#ffff00" />
<rect x="482" y="315" width="1" height="39" fill="#ffff00" />
<rect x="483" y="289" width="1" height="65" fill="#ffff00" />
<rect x="484" y="289" width="1" height="65" fill="#ffff00" />
<rect x="485" y="328" width="1" height="26" fill="#ffff00" />
<rect x="486" y="276" width="1" height="78" fill="#ffff00" />
<rect x="487" y="315" width="1" height="39" fill="#ffff00" />
<rect x="488" y="328" width="1" height="26" fill="#ffff00" />
<rect x="489" y="328" width="1" height="26" fill="#ffff00" />
<rect x="490" y="302" width="1" height="52" fill="#ffff00" />
<rect x="491" y="328" width="1" height="26" fill="#ffff00" />
<rect x="494" y="341" width="1" height="13" fill="#ffff00" />
<rect x="497" y="302" width="1" height="52" fill="#ffff00" />
<rect x="499" y="315" width="1" height="39" fill="#ffff00" />
<rect x="502" y="328" width="1" height="26" fill="#ffff00" />
<rect x="504" y="328" width="1" height="26" fill="#ffff00" />
<rect x="505" y="328" width="1" height="26" fill="#ffff00" />
<rect x="507" y="263" width="1" height="91" fill="#ffff00" />
<rect x="510" y="289" width="1" height="65" fill="#ffff00" />
<rect x="511" y="328" width="1" height="26" fill="#ffff00" />
<rect x="513" y="302" width="1" height="52" fill="#ffff00" />
<rect x="514" y="302" width="1" height="52" fill="#ffff00" />
<polyline points="62,295.6 63,298.5 64,302.7 65,300.6 66,298.2 67,300.2 68,295.6 69,296.4 70,295.0 71,300.5 72,303.4 73,300.2 74,295.8 75,294.7 76,294.4 77,293.9 78,298.8 79,293.8 80,295.8 81,293.5 82,297.1 83,297.3 84,288.3 85,292.3 86,297.4 87,293.1 88,295.1 89,299.0 90,292.6 91,293.0 92,295.8 93,294.6 94,292.9 95,294.1 96,287.1 97,289.3 98,293.7 99,293.9 100,291.7 101,288.9 102,287.6 103,289.0 104,290.8 105,291.7 106,290.1 107,290.9 108,286.3 109,290.7 110,286.0 111,286.1 112,290.1 113,288.9 114,290.0 115,290.2 116,286.6 117,288.0 118,289.5 119,289.0 120,285.3 121,291.1 122,282.3 123,285.9 124,288.2 125,289.4 126,290.1 127,287.4 128,287.5 129,292.7 130,293.5 131,290.0 132,297.8 133,289.9 134,291.1 135,295.4 136,292.7 137,291.1 138,292.6 139,289.0 140,295.6 141,292.6 142,298.1 143,295.5 144,297.1 145,293.8 146,298.2 147,291.9 148,294.0 149,299.6 150,298.7 151,294.6 152,294.8 153,294.6 154,299.5 155,293.4 156,299.2 157,299.4 158,298.9 159,296.4 160,299.7 161,295.2 162,294.5 163,296.8 164,296.8 165,299.0 166,297.8 167,295.8 168,298.7 169,293.8 170,297.8 171,295.0 172,296.5 173,298.8 174,294.4 175,298.8 176,293.7 177,296.9 178,295.5 179,293.1 180,292.9 181,297.5 182,291.8 183,296.1 184,293.6 185,290.1 186,296.0 187,295.7 188,294.5 189,298.0 190,296.5 191,295.0 192,294.8 193,290.6 194,294.7 195,293.4 196,294.2 197,291.9 198,292.1 199,292.5 200,292.6 201,294.5 202,294.5 203,292.6 204,289.6 205,293.1 206,290.5 207,292.4 208,292.5 209,292.8 210,285.7 211,293.3 212,292.2 213,294.5 214,289.2 215,291.0 216,292.7 217,292.6 218,289.4 219,287.6 220,289.1 221,289.5 222,288.0 223,288.3 224,290.0 225,292.8 226,292.3 227,293.4 228,288.2 229,292.2 230,289.9 231,291.3 232,291.2 233,293.1 234,287.7 235,288.7 236,290.2 237,288.9 238,292.4 239,292.1 240,290.7 241,294.4 242,288.4 243,292.8 244,289.7 245,292.4 246,289.8 247,288.9 248,293.5 249,289.1 250,285.3 251,291.8 252,289.6 253,292.1 254,292.3 255,291.3 256,293.4 257,293.6 258,291.6 259,295.3 260,293.5 261,292.4 262,290.0 263,293.3 264,289.8 265,292.7 266,294.9 267,289.9 268,292.8 269,290.4 270,290.9 271,290.5 272,295.0 273,292.8 274,294.8 275,292.1 276,293.8 277,288.1 278,292.0 279,287.8 280,297.5 281,291.8 282,292.9 283,294.3 284,292.7 285,292.4 286,295.2 287,291.3 288,295.4 289,292.7 290,292.2 291,291.7 292,294.0 293,293.8 294,290.4 295,295.6 296,296.0 297,290.5 298,290.0 299,292.1 300,295.7 301,290.6 302,290.2 303,293.8 304,289.7 305,289.7 306,293.1 307,294.0 308,289.9 309,290.3 310,294.1 311,293.9 312,293.2 313,294.2 314,292.5 315,294.4 316,289.6 317,293.1 318,292.8 319,294.2 320,292.3 321,286.0 322,290.8 323,290.7 324,289.1 325,291.7 326,291.4 327,290.2 328,290.8 329,288.3 330,287.7 331,289.8 332,287.3 333,290.8 334,292.5 335,285.0 336,288.5 337,292.9 338,288.1 339,292.3 340,287.5 341,288.6 342,289.1 343,289.4 344,292.0 345,290.9 346,287.8 347,289.7 348,287.3 349,286.6 350,286.3 351,286.8 352,282.2 353,287.3 354,286.3 355,287.5 356,290.7 357,286.7 358,294.9 359,288.4 360,290.0 361,287.5 362,285.0 363,289.3 364,287.4 365,286.4 366,284.8 367,286.0 368,285.2 369,287.2 370,284.9 371,290.8 372,286.2 373,285.5 374,286.6 375,287.5 376,288.1 377,285.5 378,289.4 379,287.3 380,287.8 381,287.5 382,287.6 383,287.0 384,290.8 385,286.8 386,290.9 387,287.1 388,290.4 389,291.0 390,291.5 391,291.2 392,289.1 393,283.8 394,289.4 395,290.0 396,286.7 397,288.7 398,287.1 399,287.5 400,288.1 401,289.5 402,287.2 403,290.7 404,287.4 405,290.8 406,290.8 407,291.8 408,289.4 409,285.6 410,286.9 411,292.7 412,287.2 413,292.7 414,290.8 415,294.1 416,289.6 417,287.9 418,292.2 419,289.1 420,288.8 421,292.9 422,288.9 423,293.2 424,289.2 425,292.4 426,289.4 427,292.3 428,292.4 429,289.3 430,289.9 431,288.7 432,294.6 433,292.3 434,288.8 435,291.1 436,293.6 437,291.0 438,288.9 439,292.1 440,288.8 441,289.8 442,292.5 443,291.0 444,292.5 445,292.4 446,290.0 447,294.2 448,292.5 449,293.1 450,294.7 451,292.4 452,289.6 453,289.2 454,291.5 455,295.0 456,291.6 457,291.8 458,292.4 459,293.6 460,293.9 461,294.1 462,291.2 463,291.9 464,289.6 465,294.0 466,293.9 467,289.5 468,290.9 469,290.4 470,294.4 471,291.2 472,292.8 473,291.3 474,290.0 475,290.4 476,290.7 477,292.6 478,290.5 479,291.9 480,292.6 481,291.5 482,289.7 483,288.8 484,294.8 485,291.4 486,291.9 487,293.7 488,292.9 489,291.7 490,292.0 491,290.1 492,290.8 493,290.7 494,290.2 495,293.0 496,289.4 497,295.0 498,294.6 499,290.2 500,289.4 501,293.6 502,292.4 503,291.5 504,294.9 505,290.1 506,291.6 507,290.7 508,294.1 509,291.6 510,289.9 511,294.8 512,293.9 513,289.5 514,294.7" fill="none" stroke="#ff00ff" stroke-width="1.2" shape-rendering="crispEdges"/>
<rect x="516" y="223" width="1" height="132" fill="#c8c8c8" />
<rect x="59" y="354" width="470" height="1" fill="#0000ff" />
<text y="68" fill="#000" font-size="13"><tspan x="273.5" textLength="99.8" lengthAdjust="spacingAndGlyphs">recorded with _NEC</tspan> <tspan x="390.9" textLength="138.8" lengthAdjust="spacingAndGlyphs">DVD_RW ND-3500AG v2.19</tspan></text>
<rect x="562.5" y="59.5" width="67" height="18" rx="3" fill="#fff" stroke="#008080" stroke-width="1" shape-rendering="geometricPrecision"/>
<rect x="564" y="70" width="64" height="7" fill="#c4c4c4" />
<path d="M564 70.5H628" stroke="#fff" stroke-width="1" stroke-dasharray="1 1"/>
<rect x="564" y="76" width="64" height="1" fill="#a0a0a0" />
<text y="72.0" fill="#000" font-size="12" x="583.8" textLength="23.0" lengthAdjust="spacingAndGlyphs">開始</text>
<rect x="654.5" y="59.5" width="67" height="18" rx="3" fill="#fff" stroke="#008080" stroke-width="1" shape-rendering="geometricPrecision"/>
<path d="M655.5 74V62" fill="none" stroke="#008080" stroke-width="1"/>
<rect x="656" y="70" width="64" height="7" fill="#c4c4c4" />
<path d="M656 70.5H720" stroke="#fff" stroke-width="1" stroke-dasharray="1 1"/>
<rect x="656" y="76" width="64" height="1" fill="#a0a0a0" />
<rect x="656.5" y="60.5" width="64" height="15" fill="none" stroke="#000" stroke-dasharray="1 1"/>
<text y="72.0" fill="#000" font-size="12" x="668.0" textLength="38.3" lengthAdjust="spacingAndGlyphs">終了(X)</text>
<rect x="697" y="73" width="7" height="1" fill="#000" />
<path d="M568 92.5H565.5Q561.5 92.5 561.5 96.5V162.5Q561.5 166.5 565.5 166.5H719.5Q723.5 166.5 723.5 162.5V96.5Q723.5 92.5 719.5 92.5H630" fill="none" stroke="#b4b4b4" stroke-width="1" shape-rendering="geometricPrecision"/>
<text y="96.0" fill="#008080" font-size="12" x="569.8" textLength="57.7" lengthAdjust="spacingAndGlyphs">ディスク情報</text>
<text y="111.0" fill="#000" font-size="12.5" x="569.2" textLength="31.0" lengthAdjust="spacingAndGlyphs">タイプ:</text>
<text y="111.0" fill="#000080" font-size="13" x="617.5" textLength="39.0" lengthAdjust="spacingAndGlyphs">DVD+R</text>
<text y="126.0" fill="#000" font-size="12.5" x="569.2" textLength="14.0" lengthAdjust="spacingAndGlyphs">ID:</text>
<text y="126.0" fill="#000080" font-size="13" x="617.5" textLength="78.0" lengthAdjust="spacingAndGlyphs">RICOHJPN R01</text>
<text y="141.0" fill="#000" font-size="12.5" x="569.2" textLength="27.0" lengthAdjust="spacingAndGlyphs">日付:</text>
<text y="141.0" fill="#000080" font-size="13" x="617.5" textLength="75.0" lengthAdjust="spacingAndGlyphs">28 March 2005</text>
<text y="156.0" fill="#000" font-size="12.5" x="569.2" textLength="29.0" lengthAdjust="spacingAndGlyphs">Label:</text>
<text y="156.0" fill="#000080" font-size="13" x="617.5" textLength="72.0" lengthAdjust="spacingAndGlyphs">CDS_TEST_B2</text>
<path d="M568 173.5H565.5Q561.5 173.5 561.5 177.5V334.5Q561.5 338.5 565.5 338.5H719.5Q723.5 338.5 723.5 334.5V177.5Q723.5 173.5 719.5 173.5H614" fill="none" stroke="#b4b4b4" stroke-width="1" shape-rendering="geometricPrecision"/>
<text y="177.0" fill="#008080" font-size="13" x="569.5" textLength="41.0" lengthAdjust="spacingAndGlyphs">Settings</text>
<text y="198.0" fill="#000" font-size="12" x="568.5" textLength="48.0" lengthAdjust="spacingAndGlyphs">転送速度</text>
<rect x="631" y="185" width="82" height="20" fill="#fff" />
<rect x="631" y="185" width="82" height="1" fill="#707070" />
<rect x="631" y="185" width="1" height="20" fill="#707070" />
<rect x="632" y="186" width="80" height="1" fill="#a0a0a0" />
<rect x="632" y="186" width="1" height="18" fill="#a0a0a0" />
<rect x="631" y="204" width="82" height="1" fill="#c0c0c0" />
<rect x="712" y="185" width="1" height="20" fill="#c0c0c0" />
<rect x="696" y="187" width="16" height="17" fill="#c4c4c4" />
<rect x="696" y="187" width="16" height="1" fill="#e8e8e8" />
<rect x="696" y="187" width="1" height="17" fill="#e8e8e8" />
<rect x="696" y="203" width="16" height="1" fill="#808080" />
<rect x="711" y="187" width="1" height="17" fill="#808080" />
<path d="M700.3 192.6L703.8 196.4L707.6 192.2" fill="none" stroke="#005000" stroke-width="1.8" shape-rendering="geometricPrecision"/>
<text y="200.0" fill="#000" font-size="12" x="634.3" textLength="24.0" lengthAdjust="spacingAndGlyphs">最大</text>
<text y="225.0" fill="#000" font-size="12" x="568.5" textLength="24.0" lengthAdjust="spacingAndGlyphs">開始</text>
<rect x="631.5" y="209.5" width="69" height="17" fill="#fff" stroke="#808080" stroke-width="1" stroke-dasharray="1 1"/>
<text y="223.0" fill="#000" font-size="13" x="633.9" textLength="44.1" lengthAdjust="spacingAndGlyphs">0000 MB</text>
<text y="247.0" fill="#000" font-size="12" x="568.5" textLength="48.0" lengthAdjust="spacingAndGlyphs">終了位置</text>
<rect x="631.5" y="232.5" width="69" height="17" fill="#fff" stroke="#808080" stroke-width="1" stroke-dasharray="1 1"/>
<text y="246.0" fill="#000" font-size="13" x="633.9" textLength="44.1" lengthAdjust="spacingAndGlyphs">4482 MB</text>
<rect x="569.5" y="255.5" width="12" height="12" fill="#fff" stroke="#108080" stroke-width="1"/>
<path d="M572.3 261.2L574.8 264L579 258.6" fill="none" stroke="#00d800" stroke-width="2.2" shape-rendering="geometricPrecision"/>
<text y="266.0" fill="#000" font-size="13" x="584.8" textLength="67.5" lengthAdjust="spacingAndGlyphs">Show C1/PIE</text>
<rect x="569.5" y="272.5" width="12" height="12" fill="#fff" stroke="#108080" stroke-width="1"/>
<path d="M572.3 278.2L574.8 281L579 275.6" fill="none" stroke="#00d800" stroke-width="2.2" shape-rendering="geometricPrecision"/>
<text y="283.0" fill="#000" font-size="13" x="584.8" textLength="67.5" lengthAdjust="spacingAndGlyphs">Show C2/PIF</text>
<rect x="569.5" y="288.5" width="12" height="12" fill="#fff" stroke="#108080" stroke-width="1"/>
<path d="M572.3 294.2L574.8 297L579 291.6" fill="none" stroke="#00d800" stroke-width="2.2" shape-rendering="geometricPrecision"/>
<text y="299.0" fill="#000" font-size="13" x="584.8" textLength="58.0" lengthAdjust="spacingAndGlyphs">Show Jitter</text>
<rect x="569.5" y="305.5" width="12" height="12" fill="#fff" stroke="#108080" stroke-width="1"/>
<path d="M572.3 311.2L574.8 314L579 308.6" fill="none" stroke="#00d800" stroke-width="2.2" shape-rendering="geometricPrecision"/>
<text y="316.0" fill="#000" font-size="13" x="584.8" textLength="91.5" lengthAdjust="spacingAndGlyphs">Show Read Speed</text>
<rect x="569.5" y="321.5" width="12" height="12" fill="#fff" stroke="#108080" stroke-width="1"/>
<path d="M572.3 327.2L574.8 330L579 324.6" fill="none" stroke="#00d800" stroke-width="2.2" shape-rendering="geometricPrecision"/>
<text y="332.0" fill="#000" font-size="13" x="584.8" textLength="91.5" lengthAdjust="spacingAndGlyphs">Show Write Speed</text>
<path d="M565.5 344.5Q561.5 344.5 561.5 348.5V363.5Q561.5 367.5 565.5 367.5H719.5Q723.5 367.5 723.5 363.5V348.5Q723.5 344.5 719.5 344.5Z" fill="none" stroke="#b4b4b4" stroke-width="1" shape-rendering="geometricPrecision"/>
<text y="360.0" fill="#000" font-size="12" x="569.5" textLength="51.0" lengthAdjust="spacingAndGlyphs">品質スコア:</text>
<text y="360.0" fill="#000080" font-size="13" x="694.8" textLength="11.4" lengthAdjust="spacingAndGlyphs">96</text>
<path d="M565.5 374.5Q561.5 374.5 561.5 378.5V432.5Q561.5 436.5 565.5 436.5H719.5Q723.5 436.5 723.5 432.5V378.5Q723.5 374.5 719.5 374.5Z" fill="none" stroke="#b4b4b4" stroke-width="1" shape-rendering="geometricPrecision"/>
<text y="393.0" fill="#000" font-size="12" x="569.5" textLength="50.0" lengthAdjust="spacingAndGlyphs">進行状況:</text>
<text y="393.0" fill="#000080" font-size="13" x="678.5" textLength="29.0" lengthAdjust="spacingAndGlyphs">100 %</text>
<text y="411.0" fill="#000" font-size="12" x="569.5" textLength="47.0" lengthAdjust="spacingAndGlyphs">ポジション:</text>
<text y="411.0" fill="#000080" font-size="13" x="662.5" textLength="45.0" lengthAdjust="spacingAndGlyphs">4481 MB</text>
<text y="429.0" fill="#000" font-size="12" x="569.5" textLength="26.0" lengthAdjust="spacingAndGlyphs">速度:</text>
<text y="429.0" fill="#000080" font-size="13" x="676.5" textLength="31.0" lengthAdjust="spacingAndGlyphs">8.40 X</text>
<rect x="18" y="374" width="8" height="1" fill="#808080" />
<rect x="90" y="374" width="98" height="1" fill="#808080" />
<rect x="18" y="374" width="1" height="63" fill="#808080" />
<rect x="187" y="374" width="1" height="63" fill="#808080" />
<rect x="18" y="436" width="170" height="1" fill="#808080" />
<rect x="28.5" y="371.5" width="7" height="7" fill="#00ffff" stroke="#000" stroke-width="1"/>
<text y="378.0" fill="#000" font-size="13" x="40.7" textLength="43.5" lengthAdjust="spacingAndGlyphs">PI Errors</text>
<rect x="198" y="374" width="8" height="1" fill="#808080" />
<rect x="280" y="374" width="88" height="1" fill="#808080" />
<rect x="198" y="374" width="1" height="63" fill="#808080" />
<rect x="367" y="374" width="1" height="63" fill="#808080" />
<rect x="198" y="436" width="170" height="1" fill="#808080" />
<rect x="208.5" y="371.5" width="7" height="7" fill="#ffff00" stroke="#000" stroke-width="1"/>
<text y="378.0" fill="#000" font-size="13" x="220.7" textLength="53.3" lengthAdjust="spacingAndGlyphs">PI Failures</text>
<rect x="379" y="374" width="8" height="1" fill="#808080" />
<rect x="429" y="374" width="120" height="1" fill="#808080" />
<rect x="379" y="374" width="1" height="47" fill="#808080" />
<rect x="548" y="374" width="1" height="47" fill="#808080" />
<rect x="379" y="420" width="170" height="1" fill="#808080" />
<rect x="389.5" y="371.5" width="7" height="7" fill="#ff00ff" stroke="#000" stroke-width="1"/>
<text y="378.0" fill="#000" font-size="13" x="402.0" textLength="26.3" lengthAdjust="spacingAndGlyphs">Jitter</text>
<text y="393.0" fill="#000" font-size="12" x="26.6" textLength="25.5" lengthAdjust="spacingAndGlyphs">平均:</text>
<text y="393.0" fill="#000080" font-size="13" x="155.7" textLength="20.0" lengthAdjust="spacingAndGlyphs">2.68</text>
<text y="411.0" fill="#000" font-size="12" x="26.6" textLength="25.5" lengthAdjust="spacingAndGlyphs">最大:</text>
<text y="411.0" fill="#000080" font-size="13" x="164.2" textLength="11.5" lengthAdjust="spacingAndGlyphs">13</text>
<text y="429.0" fill="#000" font-size="12" x="26.6" textLength="29.0" lengthAdjust="spacingAndGlyphs">合計 :</text>
<text y="429.0" fill="#000080" font-size="13" x="145.7" textLength="30.0" lengthAdjust="spacingAndGlyphs">26189</text>
<text y="393.0" fill="#000" font-size="12" x="208.4" textLength="25.5" lengthAdjust="spacingAndGlyphs">平均:</text>
<text y="393.0" fill="#000080" font-size="13" x="337.5" textLength="19.5" lengthAdjust="spacingAndGlyphs">0.15</text>
<text y="411.0" fill="#000" font-size="12" x="208.4" textLength="25.5" lengthAdjust="spacingAndGlyphs">最大:</text>
<text y="411.0" fill="#000080" font-size="13" x="352.0" textLength="5.0" lengthAdjust="spacingAndGlyphs">7</text>
<text y="429.0" fill="#000" font-size="12" x="208.4" textLength="29.0" lengthAdjust="spacingAndGlyphs">合計 :</text>
<text y="429.0" fill="#000080" font-size="13" x="335.0" textLength="22.0" lengthAdjust="spacingAndGlyphs">1711</text>
<text y="393.0" fill="#000" font-size="12" x="389.0" textLength="25.5" lengthAdjust="spacingAndGlyphs">平均:</text>
<text y="393.0" fill="#000080" font-size="13" x="508.1" textLength="30.7" lengthAdjust="spacingAndGlyphs">9.00 %</text>
<text y="411.0" fill="#000" font-size="12" x="389.0" textLength="25.5" lengthAdjust="spacingAndGlyphs">最大:</text>
<text y="411.0" fill="#000080" font-size="13" x="508.8" textLength="30.0" lengthAdjust="spacingAndGlyphs">11.0 %</text>
<text y="434.0" fill="#000" font-size="13" x="390.0" textLength="60.5" lengthAdjust="spacingAndGlyphs">PO Failures:</text>
<text y="434.0" fill="#000080" font-size="13" x="532.2" textLength="5.3" lengthAdjust="spacingAndGlyphs">0</text>
</svg>
</body></html>
